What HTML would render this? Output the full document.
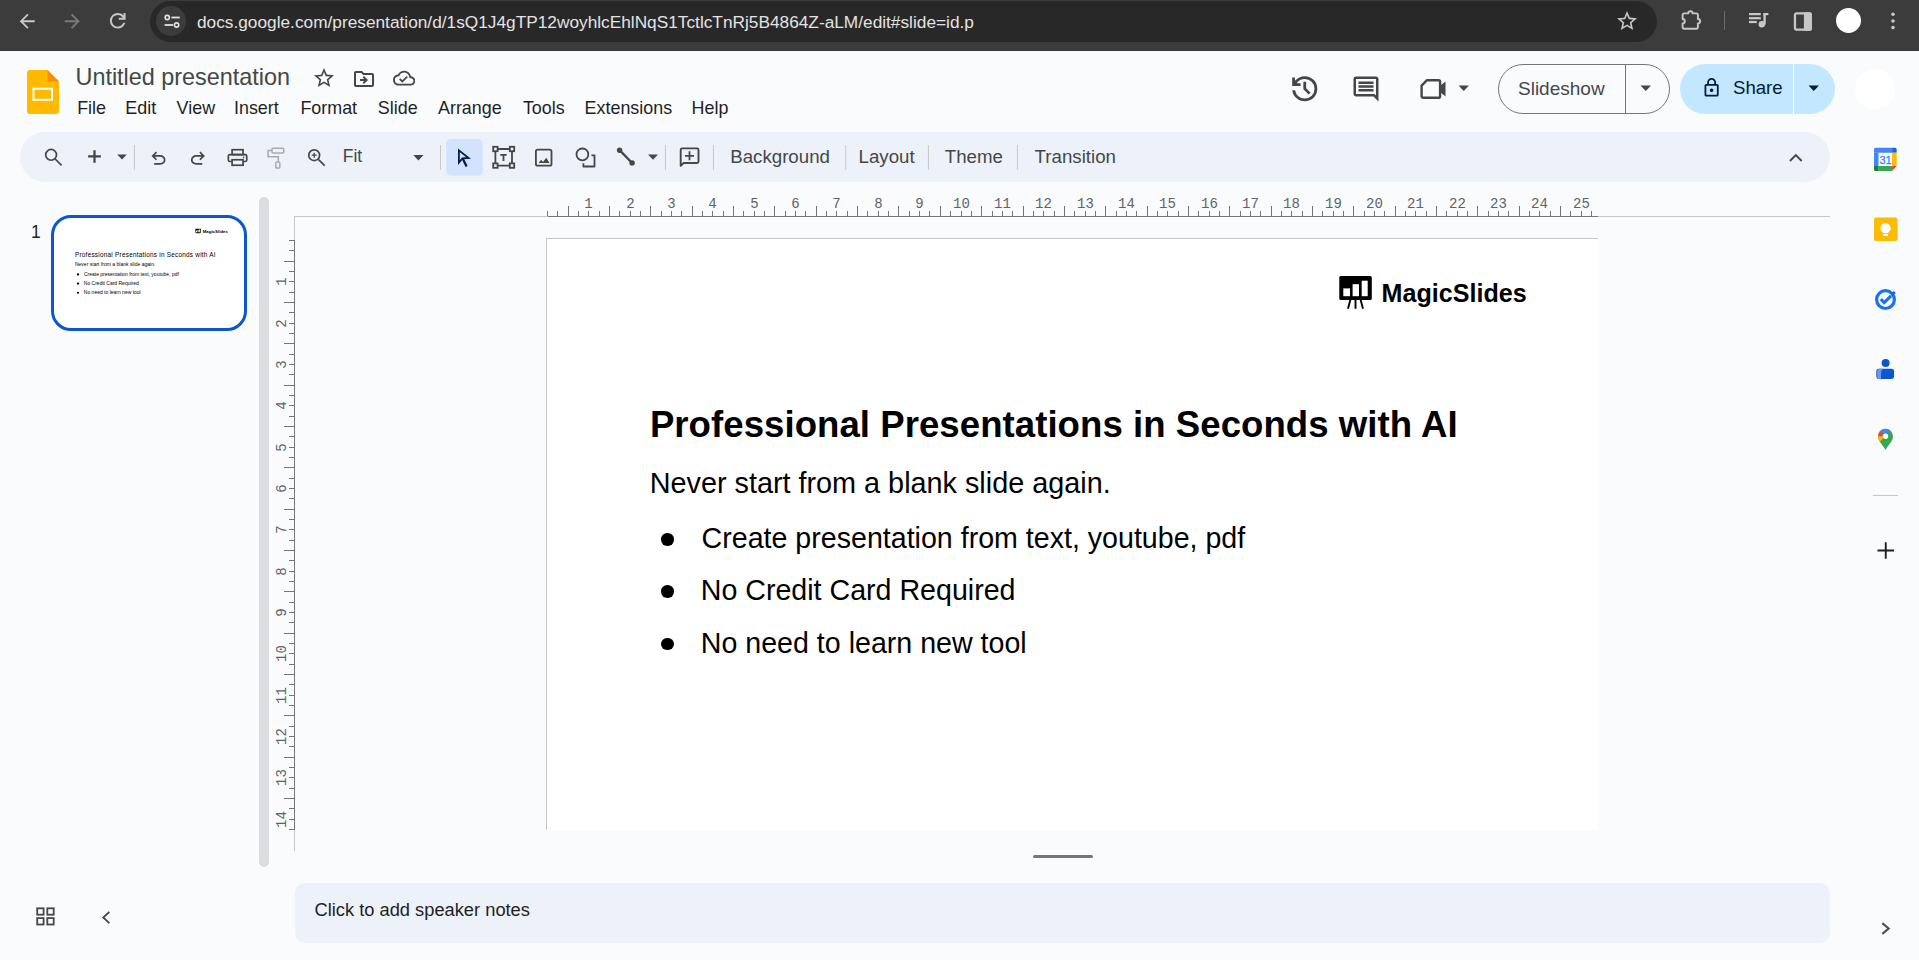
<!DOCTYPE html>
<html><head><meta charset="utf-8">
<style>
*{margin:0;padding:0;box-sizing:border-box}
html,body{width:1919px;height:960px;overflow:hidden;background:#f9fbfd;font-family:"Liberation Sans",sans-serif;position:relative}
.a{position:absolute}
.t{position:absolute;line-height:1;white-space:pre}
svg{position:absolute;display:block}
</style></head><body>

<!-- ===== Browser chrome ===== -->
<div class="a" style="left:0;top:0;width:1919px;height:51px;background:#3c3c3c"></div>
<div class="a" style="left:150px;top:0.5px;width:1507px;height:41.5px;border-radius:21px;background:#282828"></div>
<div class="a" style="left:156px;top:6px;width:30px;height:30px;border-radius:15px;background:#3c3c3c"></div>
<!-- back / forward / reload -->
<svg style="left:16.25px;top:9.75px" width="22.5" height="22.5" viewBox="0 -960 960 960"><path fill="#c7c7c7" d="m313-440 224 224-57 56-320-320 320-320 57 56-224 224h487v80H313Z"/></svg>
<svg style="left:61.25px;top:9.75px" width="22.5" height="22.5" viewBox="0 -960 960 960"><path fill="#7b7b7b" d="M647-440H160v-80h487L423-744l57-56 320 320-320 320-57-56 224-224Z"/></svg>
<svg style="left:105.8px;top:8.6px" width="23.5" height="23.5" viewBox="0 -960 960 960"><path fill="#c7c7c7" d="M480-160q-134 0-227-93t-93-227q0-134 93-227t227-93q69 0 132 28.5T720-690v-110h80v280H520v-80h168q-32-56-87.5-88T480-720q-100 0-170 70t-70 170q0 100 70 170t170 70q77 0 139-44t87-116h84q-28 106-114 173t-196 67Z"/></svg>
<!-- tune icon -->
<svg style="left:162.6px;top:12px" width="20" height="20" viewBox="0 0 20 20"><g fill="none" stroke="#e3e3e3" stroke-width="1.6"><circle cx="4.25" cy="5.5" r="2.1"/><circle cx="13.6" cy="13" r="2.1"/></g><g fill="#e3e3e3"><rect x="8.4" y="4.6" width="8.4" height="1.8"/><rect x="1.6" y="12.1" width="8.6" height="1.8"/></g></svg>
<div class="t" style="left:197px;top:13.7px;font-size:17.27px;color:#e3e3e3">docs.google.com/presentation/d/1sQ1J4gTP12woyhlcEhlNqS1TctlcTnRj5B4864Z-aLM/edit#slide=id.p</div>
<!-- star -->
<svg style="left:1615px;top:9px" width="24" height="24" viewBox="0 0 24 24"><path fill="#c7c7c7" d="M22 9.24l-7.19-.62L12 2 9.19 8.63 2 9.24l5.46 4.73L5.82 21 12 17.27 18.18 21l-1.63-7.03L22 9.24zM12 15.4l-3.76 2.27 1-4.28-3.32-2.88 4.38-.38L12 6.1l1.71 4.04 4.38.38-3.32 2.88 1 4.28L12 15.4z"/></svg>
<!-- extension puzzle -->
<svg style="left:0;top:0" width="1919" height="50" viewBox="0 0 1919 50"><path fill="none" stroke="#c7c7c7" stroke-width="1.9" stroke-linejoin="round" d="M1682.6 15a1.6 1.6 0 0 1 1.6-1.6H1688.2a2.2 2.2 0 0 1 4.4 0H1696.3a1.6 1.6 0 0 1 1.6 1.6V19.05a2.2 2.2 0 0 1 0 4.4V27.1a1.6 1.6 0 0 1-1.6 1.6H1684.2a1.6 1.6 0 0 1-1.6-1.6V23.45a2.2 2.2 0 0 0 0-4.4Z"/></svg>
<div class="a" style="left:1723.5px;top:11px;width:1px;height:19px;background:#6b6b6b"></div>
<!-- queue music -->
<svg style="left:1747.5px;top:11px" width="22" height="18" viewBox="0 0 22 18"><g fill="#c7c7c7"><rect x="1" y="2" width="11.8" height="2.2"/><rect x="1" y="6.1" width="11.8" height="2.2"/><rect x="1" y="9.9" width="7.8" height="2.2"/><rect x="15.4" y="2" width="2.4" height="11.5"/><rect x="15.4" y="2" width="5" height="2.2"/><circle cx="13.8" cy="13.2" r="3.2"/></g></svg>
<!-- side panel -->
<svg style="left:1792.5px;top:11px" width="20" height="20" viewBox="0 0 20 20"><rect x="1.95" y="2.35" width="15.8" height="16.3" rx="2" fill="none" stroke="#c7c7c7" stroke-width="2.3"/><rect x="10.9" y="1.2" width="7.9" height="18.6" rx="1.5" fill="#c7c7c7"/></svg>
<div class="a" style="left:1835.5px;top:8px;width:25px;height:25px;border-radius:50%;background:#fff"></div>
<svg style="left:1881px;top:9px" width="24" height="24" viewBox="0 0 24 24"><g fill="#c7c7c7"><circle cx="12" cy="5.3" r="1.8"/><circle cx="12" cy="12" r="1.8"/><circle cx="12" cy="18.6" r="1.8"/></g></svg>

<!-- ===== Slides header ===== -->
<svg style="left:27px;top:70px" width="32" height="44" viewBox="0 0 32 44"><path fill="#ffba00" d="M3 0h17.5L32 11.5V41a3 3 0 0 1-3 3H3a3 3 0 0 1-3-3V3a3 3 0 0 1 3-3z"/><path fill="#ff8f00" d="M20.5 0L32 11.5H20.5z"/><rect x="6.5" y="18.7" width="18.5" height="11.1" fill="none" stroke="#fff" stroke-width="2"/></svg>
<div class="t" style="left:75.5px;top:65.5px;font-size:23.4px;color:#444746">Untitled presentation</div>

<div class="t" style="left:77.2px;top:99.8px;font-size:17.9px;color:#1f1f1f">File</div>
<div class="t" style="left:125.3px;top:99.8px;font-size:17.9px;color:#1f1f1f">Edit</div>
<div class="t" style="left:176.6px;top:99.8px;font-size:17.9px;color:#1f1f1f">View</div>
<div class="t" style="left:234px;top:99.8px;font-size:17.9px;color:#1f1f1f">Insert</div>
<div class="t" style="left:300.4px;top:99.8px;font-size:17.9px;color:#1f1f1f">Format</div>
<div class="t" style="left:377.8px;top:99.8px;font-size:17.9px;color:#1f1f1f">Slide</div>
<div class="t" style="left:438px;top:99.8px;font-size:17.9px;color:#1f1f1f">Arrange</div>
<div class="t" style="left:522.9px;top:99.8px;font-size:17.9px;color:#1f1f1f">Tools</div>
<div class="t" style="left:584.6px;top:99.8px;font-size:17.9px;color:#1f1f1f">Extensions</div>
<div class="t" style="left:691.6px;top:99.8px;font-size:17.9px;color:#1f1f1f">Help</div>

<!-- star / move / cloud -->
<svg style="left:311.5px;top:66px" width="24" height="24" viewBox="0 0 24 24"><path fill="#444746" d="M22 9.24l-7.19-.62L12 2 9.19 8.63 2 9.24l5.46 4.73L5.82 21 12 17.27 18.18 21l-1.63-7.03L22 9.24zM12 15.4l-3.76 2.27 1-4.28-3.32-2.88 4.38-.38L12 6.1l1.71 4.04 4.38.38-3.32 2.88 1 4.28L12 15.4z"/></svg>
<svg style="left:351.5px;top:67px" width="24" height="24" viewBox="0 0 24 24"><path fill="#444746" d="M20 6h-8l-2-2H4c-1.1 0-1.99.9-1.99 2L2 18c0 1.1.9 2 2 2h16c1.1 0 2-.9 2-2V8c0-1.1-.9-2-2-2zm0 12H4V6h5.17l2 2H20v10zm-7.84-6H8v2h4.16l-1.59 1.59L11.99 17 16 13.01 11.99 9l-1.41 1.41L12.16 12z"/></svg>
<svg style="left:392.5px;top:67.3px" width="22.3" height="22.3" viewBox="0 0 24 24"><path fill="#444746" d="M19.35 10.04C18.67 6.59 15.64 4 12 4 9.11 4 6.6 5.64 5.35 8.04 2.34 8.36 0 10.91 0 14c0 3.31 2.69 6 6 6h13c2.760 0 5-2.24 5-5 0-2.64-2.05-4.78-4.65-4.96zM19 18H6c-2.21 0-4-1.79-4-4 0-2.050 1.53-3.76 3.56-3.97l1.07-.11.5-.95C8.08 7.14 9.94 6 12 6c2.62 0 4.88 1.86 5.39 4.43l.3 1.5 1.53.11c1.56.1 2.78 1.41 2.78 2.96 0 1.65-1.35 3-3 3zm-9-3.820l-2.09-2.09L6.5 13.5 10 17l6.01-6.01-1.41-1.41z"/></svg>

<!-- right header icons -->
<svg style="left:1287.8px;top:72.2px" width="33.5" height="33.5" viewBox="0 -960 960 960"><path fill="#444746" d="M480-120q-138 0-240.5-91.5T122-440h82q14 104 92.5 172T480-200q117 0 198.5-81.5T760-480q0-117-81.5-198.5T480-760q-69 0-129 32t-101 88h110v80H120v-240h80v94q51-64 124.5-99T480-840q75 0 140.5 28.5t114 77q48.5 48.5 77 114T840-480q0 75-28.5 140.5t-77 114q-48.5 48.5-114 77T480-120Zm112-192L440-464v-216h80v184l128 128-56 56Z"/></svg>
<svg style="left:1351px;top:74px" width="30" height="30" viewBox="0 0 24 24"><path fill="#444746" d="M21.99 4c0-1.1-.89-2-1.99-2H4c-1.1 0-2 .9-2 2v12c0 1.1.9 2 2 2h14l4 4-.01-18zM20 4v13.17L18.83 16H4V4h16zM6 12h12v2H6zm0-3h12v2H6zm0-3h12v2H6z"/></svg>
<svg style="left:1420px;top:78px" width="28" height="22" viewBox="0 0 28 22"><path fill="none" stroke="#444746" stroke-width="2.4" stroke-linejoin="round" d="M7 2.2h11.5a1.6 1.6 0 0 1 1.6 1.6V18.2a1.6 1.6 0 0 1-1.6 1.6H3.2a1.6 1.6 0 0 1-1.6-1.6V7.6z"/><path fill="#444746" d="M20 8l5.5-4.5v15L20 14z"/></svg>
<svg style="left:1458px;top:85px" width="12" height="7" viewBox="0 0 12 7"><path fill="#444746" d="M0.5 0.5h10.5L5.75 6z"/></svg>

<!-- Slideshow -->
<div class="a" style="left:1498px;top:64px;width:172px;height:50px;border:1.2px solid #747775;border-radius:25px"></div>
<div class="a" style="left:1625px;top:64px;width:1.2px;height:50px;background:#747775"></div>
<div class="t" style="left:1518px;top:79px;font-size:19px;color:#444746">Slideshow</div>
<svg style="left:1640px;top:85px" width="12" height="7" viewBox="0 0 12 7"><path fill="#444746" d="M0.5 0.5h10.5L5.75 6z"/></svg>
<!-- Share -->
<div class="a" style="left:1680px;top:64px;width:155px;height:50px;border-radius:25px;background:#c2e7ff"></div>
<div class="a" style="left:1793px;top:64px;width:1px;height:50px;background:#fff"></div>
<svg style="left:1701.3px;top:77px" width="21.2" height="21.2" viewBox="0 -960 960 960"><path fill="#001d35" d="M240-80q-33 0-56.5-23.5T160-160v-400q0-33 23.5-56.5T240-640h40v-80q0-83 58.5-141.5T480-920q83 0 141.5 58.5T680-720v80h40q33 0 56.5 23.5T800-560v400q0 33-23.5 56.5T720-80H240Zm0-80h480v-400H240v400Zm240-120q33 0 56.5-23.5T560-360q0-33-23.5-56.5T480-440q-33 0-56.5 23.5T400-360q0 33 23.5 56.5T480-280ZM360-640h240v-80q0-50-35-85t-85-35q-50 0-85 35t-35 85v80Z"/></svg>
<div class="t" style="left:1733px;top:79.3px;font-size:18.6px;color:#001d35">Share</div>
<svg style="left:1808px;top:85px" width="12" height="7" viewBox="0 0 12 7"><path fill="#001d35" d="M0.5 0.5h10.5L5.75 6z"/></svg>
<div class="a" style="left:1855px;top:68.5px;width:40px;height:40px;border-radius:50%;background:#fff"></div>

<!-- ===== Toolbar ===== -->
<div class="a" style="left:20px;top:132px;width:1810px;height:50px;border-radius:25px;background:#edf2fa"></div>

<!-- toolbar icons -->
<svg style="left:0;top:0" width="1919" height="960" viewBox="0 0 1919 960">
<g fill="none" stroke="#444746" stroke-width="1.7">
 <circle cx="51.1" cy="154.85" r="5.4"/><path d="M55.2 159 L61.6 165.4"/>
 <circle cx="314.2" cy="155.2" r="5.4"/><path d="M318.3 159.3 L324.7 165.7"/>
</g>
<g fill="none" stroke="#444746" stroke-width="1.3"><path d="M311.7 155.2h5M314.2 152.7v5"/></g>
<path fill="none" stroke="#444746" stroke-width="2.3" d="M88.1 156.4h12.8M94.5 150.2v12.5"/>
<path fill="#444746" d="M117.2 154.6h9.6l-4.8 5z M413.3 155h10.2l-5.1 5.5z M648 154.5h10l-5 5.2z"/>
<g fill="#c7c7c7"><rect x="133.9" y="145" width="1" height="24.7"/><rect x="440" y="145" width="1" height="24.7"/><rect x="665" y="145" width="1" height="24.7"/><rect x="713" y="145" width="1" height="24.7"/><rect x="845.2" y="145" width="1" height="24.7"/><rect x="927.9" y="145" width="1" height="24.7"/><rect x="1016.9" y="145" width="1" height="24.7"/></g>
<svg x="148.0" y="148.1" width="21" height="21" viewBox="0 -960 960 960"><path fill="#444746" d="M280-200v-80h284q63 0 109.5-40T720-420q0-60-46.5-100T564-560H312l104 104-56 56-200-200 200-200 56 56-104 104h252q97 0 166.5 63T800-420q0 94-69.5 157T564-200H280Z"/></svg>
<svg x="187.4" y="148.1" width="21" height="21" viewBox="0 -960 960 960"><path fill="#444746" d="M396-200q-97 0-166.5-63T160-420q0-94 69.5-157T396-640h252L544-744l56-56 200 200-200 200-56-56 104-104H396q-63 0-109.5 40T240-420q0 60 46.5 100T396-280h284v80H396Z"/></svg>
<g fill="none" stroke="#444746" stroke-width="1.7">
 <rect x="232.1" y="149.7" width="10.95" height="4.9"/>
 <rect x="228.35" y="154.6" width="18.4" height="6.9" rx="1.6"/>
 <rect x="232.1" y="159.75" width="10.95" height="5.5" fill="#edf2fa"/>
</g>
<circle cx="243.6" cy="157.4" r="0.8" fill="#444746"/>
<g fill="none" stroke="#a8abaf" stroke-width="1.5">
 <rect x="272" y="148.3" width="11.8" height="4.6" rx="1"/>
 <path d="M272 150.6h-3.9v6.2h10.2v4.4"/>
 <rect x="275.8" y="162" width="4" height="6" rx="0.8"/>
</g>
<rect x="446.2" y="139.1" width="36.6" height="36.6" rx="5" fill="#d3e3fd"/>
<path fill="none" stroke="#041e49" stroke-width="1.8" stroke-linejoin="miter" d="M458.9 150.3 V162.6 L462.4 158.4 L468.6 158 Z"/><path fill="none" stroke="#041e49" stroke-width="2.3" d="M462.6 158.3 L466.6 166.4"/>
<g fill="none" stroke="#444746" stroke-width="1.8">
 <rect x="493.2" y="146.8" width="4.4" height="4.4"/><rect x="509.8" y="146.8" width="4.4" height="4.4"/>
 <rect x="493.2" y="163.4" width="4.4" height="4.4"/><rect x="509.8" y="163.4" width="4.4" height="4.4"/>
 <path d="M497.6 149h12.2M497.6 165.6h12.2M495.4 151.2v12.2M512 151.2v12.2"/>
 <path d="M500.3 154.8h6.4M503.5 154.8v6.3"/>
 <rect x="535.9" y="149.7" width="15.6" height="16" rx="1.8"/>
 <circle cx="582.4" cy="154.4" r="5.9"/>
 <path d="M583.4 163.2v3.3h11.1v-11.2h-3.1" stroke-width="1.8" stroke-linejoin="round"/>
</g>
<path fill="#444746" d="M538.6 163.1 l2.5-3.4 1.9 2.3 3.2-4.3 3.4 5.4z"/>
<path fill="none" stroke="#444746" stroke-width="2.3" d="M619.6 150.1 L632.1 163"/>
<circle cx="619.6" cy="150.2" r="2.7" fill="#444746"/><circle cx="632.1" cy="162.9" r="2.7" fill="#444746"/>
<path fill="none" stroke="#444746" stroke-width="1.9" stroke-linejoin="round" d="M680.7 165.9V149.9a1.5 1.5 0 0 1 1.5-1.5H697a1.5 1.5 0 0 1 1.5 1.5V161.5a1.5 1.5 0 0 1-1.5 1.5H683.6Z"/>
<path fill="none" stroke="#444746" stroke-width="1.8" d="M685 155.8h9M689.5 151.3v9"/>
<path fill="none" stroke="#444746" stroke-width="1.8" d="M1789.9 161 L1795.8 155 L1801.7 161"/>
</svg>
<div class="t" style="left:342.8px;top:147.7px;font-size:17.5px;color:#444746">Fit</div>
<div class="t" style="left:730.2px;top:147.5px;font-size:18.7px;color:#444746">Background</div>
<div class="t" style="left:858.5px;top:147.5px;font-size:18.7px;color:#444746">Layout</div>
<div class="t" style="left:944.8px;top:147.5px;font-size:18.7px;color:#444746">Theme</div>
<div class="t" style="left:1034.6px;top:147.5px;font-size:18.7px;color:#444746">Transition</div>

<!-- ===== Filmstrip ===== -->
<div class="t" style="left:31px;top:223.5px;font-size:17.5px;color:#1f1f1f">1</div>
<div class="a" style="left:51px;top:215px;width:195.5px;height:115.5px;border:3.6px solid #0b57d0;border-radius:20px;background:#fff"></div>
<div class="a" style="left:57px;top:221.7px;width:1051px;height:591px;transform:scale(0.1745);transform-origin:0 0"><svg style="left:792px;top:37px" width="34" height="34" viewBox="0 0 34 34"><rect x="0.3" y="0" width="32.5" height="24.1" rx="1.6" fill="#000"/><g fill="#fff"><rect x="4.3" y="12.4" width="6.7" height="7.8"/><rect x="13.6" y="8.2" width="6.4" height="12"/><rect x="22.7" y="4.7" width="6" height="15.5"/></g><path fill="none" stroke="#000" stroke-width="1.9" d="M11.3 24 L9 32.8 M16.5 24 V32.8 M21.7 24 L24 32.8"/></svg>
<div class="t" style="left:834.6px;top:41.8px;font-size:25.1px;font-weight:700;color:#000">MagicSlides</div>
<div class="t" style="left:102.9px;top:168px;font-size:36.6px;font-weight:400;color:#000;letter-spacing:1.4px">Professional Presentations in Seconds with AI</div>
<div class="t" style="left:102.7px;top:230.2px;font-size:28.8px;color:#000">Never start from a blank slide again.</div>
<div class="a" style="left:114px;top:294.25px;width:12.5px;height:12.5px;border-radius:50%;background:#000"></div>
<div class="a" style="left:114px;top:346.35px;width:12.5px;height:12.5px;border-radius:50%;background:#000"></div>
<div class="a" style="left:114px;top:398.95px;width:12.5px;height:12.5px;border-radius:50%;background:#000"></div>
<div class="t" style="left:154.6px;top:284.5px;font-size:28.6px;color:#000">Create presentation from text, youtube, pdf</div>
<div class="t" style="left:153.8px;top:336.5px;font-size:28.6px;color:#000">No Credit Card Required</div>
<div class="t" style="left:153.8px;top:389.7px;font-size:28.6px;color:#000">No need to learn new tool</div>
</div>
<div class="a" style="left:259px;top:197px;width:10px;height:670px;border-radius:5px;background:#dadce0"></div>

<!-- ===== Editor ===== -->
<div class="a" style="left:294px;top:216px;width:1536px;height:1px;background:#c7c7c7"></div>
<div class="a" style="left:294px;top:216px;width:1px;height:635px;background:#c7c7c7"></div>
<div class="a" style="left:546px;top:238px;width:1052px;height:592px;background:#fff;border-left:1px solid #c7c7c7;border-top:1px solid #c7c7c7"></div>

<div class="a" style="left:547px;top:239px;width:1051px;height:591px;overflow:hidden"><svg style="left:792px;top:37px" width="34" height="34" viewBox="0 0 34 34"><rect x="0.3" y="0" width="32.5" height="24.1" rx="1.6" fill="#000"/><g fill="#fff"><rect x="4.3" y="12.4" width="6.7" height="7.8"/><rect x="13.6" y="8.2" width="6.4" height="12"/><rect x="22.7" y="4.7" width="6" height="15.5"/></g><path fill="none" stroke="#000" stroke-width="1.9" d="M11.3 24 L9 32.8 M16.5 24 V32.8 M21.7 24 L24 32.8"/></svg>
<div class="t" style="left:834.6px;top:41.8px;font-size:25.1px;font-weight:700;color:#000">MagicSlides</div>
<div class="t" style="left:102.9px;top:168px;font-size:36.6px;font-weight:700;color:#000;letter-spacing:0.05px">Professional Presentations in Seconds with AI</div>
<div class="t" style="left:102.7px;top:230.2px;font-size:28.8px;color:#000">Never start from a blank slide again.</div>
<div class="a" style="left:114px;top:294.25px;width:12.5px;height:12.5px;border-radius:50%;background:#000"></div>
<div class="a" style="left:114px;top:346.35px;width:12.5px;height:12.5px;border-radius:50%;background:#000"></div>
<div class="a" style="left:114px;top:398.95px;width:12.5px;height:12.5px;border-radius:50%;background:#000"></div>
<div class="t" style="left:154.6px;top:284.5px;font-size:28.6px;color:#000">Create presentation from text, youtube, pdf</div>
<div class="t" style="left:153.8px;top:336.5px;font-size:28.6px;color:#000">No Credit Card Required</div>
<div class="t" style="left:153.8px;top:389.7px;font-size:28.6px;color:#000">No need to learn new tool</div>
</div>
<svg style="left:0;top:0" width="1919" height="960" viewBox="0 0 1919 960"><g font-family="Liberation Mono" font-size="14" fill="#5f6368"><rect x="294" y="216" width="254" height="1" fill="#c7c7c7"/><rect x="1598" y="216" width="232" height="1" fill="#c7c7c7"/><rect x="548" y="216" width="1050" height="1" fill="#747775"/><rect x="547" y="211" width="1" height="5" fill="#747775"/><rect x="557" y="211" width="1" height="5" fill="#747775"/><rect x="568" y="206" width="1" height="10" fill="#747775"/><rect x="578" y="211" width="1" height="5" fill="#747775"/><rect x="588" y="211" width="1" height="5" fill="#747775"/><text x="588.50" y="208" text-anchor="middle">1</text><rect x="599" y="211" width="1" height="5" fill="#747775"/><rect x="609" y="206" width="1" height="10" fill="#747775"/><rect x="619" y="211" width="1" height="5" fill="#747775"/><rect x="630" y="211" width="1" height="5" fill="#747775"/><text x="630.50" y="208" text-anchor="middle">2</text><rect x="640" y="211" width="1" height="5" fill="#747775"/><rect x="650" y="206" width="1" height="10" fill="#747775"/><rect x="661" y="211" width="1" height="5" fill="#747775"/><rect x="671" y="211" width="1" height="5" fill="#747775"/><text x="671.50" y="208" text-anchor="middle">3</text><rect x="681" y="211" width="1" height="5" fill="#747775"/><rect x="692" y="206" width="1" height="10" fill="#747775"/><rect x="702" y="211" width="1" height="5" fill="#747775"/><rect x="712" y="211" width="1" height="5" fill="#747775"/><text x="712.50" y="208" text-anchor="middle">4</text><rect x="723" y="211" width="1" height="5" fill="#747775"/><rect x="733" y="206" width="1" height="10" fill="#747775"/><rect x="743" y="211" width="1" height="5" fill="#747775"/><rect x="754" y="211" width="1" height="5" fill="#747775"/><text x="754.50" y="208" text-anchor="middle">5</text><rect x="764" y="211" width="1" height="5" fill="#747775"/><rect x="774" y="206" width="1" height="10" fill="#747775"/><rect x="785" y="211" width="1" height="5" fill="#747775"/><rect x="795" y="211" width="1" height="5" fill="#747775"/><text x="795.50" y="208" text-anchor="middle">6</text><rect x="805" y="211" width="1" height="5" fill="#747775"/><rect x="816" y="206" width="1" height="10" fill="#747775"/><rect x="826" y="211" width="1" height="5" fill="#747775"/><rect x="836" y="211" width="1" height="5" fill="#747775"/><text x="836.50" y="208" text-anchor="middle">7</text><rect x="847" y="211" width="1" height="5" fill="#747775"/><rect x="857" y="206" width="1" height="10" fill="#747775"/><rect x="867" y="211" width="1" height="5" fill="#747775"/><rect x="878" y="211" width="1" height="5" fill="#747775"/><text x="878.50" y="208" text-anchor="middle">8</text><rect x="888" y="211" width="1" height="5" fill="#747775"/><rect x="898" y="206" width="1" height="10" fill="#747775"/><rect x="909" y="211" width="1" height="5" fill="#747775"/><rect x="919" y="211" width="1" height="5" fill="#747775"/><text x="919.50" y="208" text-anchor="middle">9</text><rect x="929" y="211" width="1" height="5" fill="#747775"/><rect x="940" y="206" width="1" height="10" fill="#747775"/><rect x="950" y="211" width="1" height="5" fill="#747775"/><rect x="961" y="211" width="1" height="5" fill="#747775"/><text x="961.50" y="208" text-anchor="middle">10</text><rect x="971" y="211" width="1" height="5" fill="#747775"/><rect x="981" y="206" width="1" height="10" fill="#747775"/><rect x="992" y="211" width="1" height="5" fill="#747775"/><rect x="1002" y="211" width="1" height="5" fill="#747775"/><text x="1002.50" y="208" text-anchor="middle">11</text><rect x="1012" y="211" width="1" height="5" fill="#747775"/><rect x="1023" y="206" width="1" height="10" fill="#747775"/><rect x="1033" y="211" width="1" height="5" fill="#747775"/><rect x="1043" y="211" width="1" height="5" fill="#747775"/><text x="1043.50" y="208" text-anchor="middle">12</text><rect x="1054" y="211" width="1" height="5" fill="#747775"/><rect x="1064" y="206" width="1" height="10" fill="#747775"/><rect x="1074" y="211" width="1" height="5" fill="#747775"/><rect x="1085" y="211" width="1" height="5" fill="#747775"/><text x="1085.50" y="208" text-anchor="middle">13</text><rect x="1095" y="211" width="1" height="5" fill="#747775"/><rect x="1105" y="206" width="1" height="10" fill="#747775"/><rect x="1116" y="211" width="1" height="5" fill="#747775"/><rect x="1126" y="211" width="1" height="5" fill="#747775"/><text x="1126.50" y="208" text-anchor="middle">14</text><rect x="1136" y="211" width="1" height="5" fill="#747775"/><rect x="1147" y="206" width="1" height="10" fill="#747775"/><rect x="1157" y="211" width="1" height="5" fill="#747775"/><rect x="1167" y="211" width="1" height="5" fill="#747775"/><text x="1167.50" y="208" text-anchor="middle">15</text><rect x="1178" y="211" width="1" height="5" fill="#747775"/><rect x="1188" y="206" width="1" height="10" fill="#747775"/><rect x="1198" y="211" width="1" height="5" fill="#747775"/><rect x="1209" y="211" width="1" height="5" fill="#747775"/><text x="1209.50" y="208" text-anchor="middle">16</text><rect x="1219" y="211" width="1" height="5" fill="#747775"/><rect x="1229" y="206" width="1" height="10" fill="#747775"/><rect x="1240" y="211" width="1" height="5" fill="#747775"/><rect x="1250" y="211" width="1" height="5" fill="#747775"/><text x="1250.50" y="208" text-anchor="middle">17</text><rect x="1260" y="211" width="1" height="5" fill="#747775"/><rect x="1271" y="206" width="1" height="10" fill="#747775"/><rect x="1281" y="211" width="1" height="5" fill="#747775"/><rect x="1291" y="211" width="1" height="5" fill="#747775"/><text x="1291.50" y="208" text-anchor="middle">18</text><rect x="1302" y="211" width="1" height="5" fill="#747775"/><rect x="1312" y="206" width="1" height="10" fill="#747775"/><rect x="1322" y="211" width="1" height="5" fill="#747775"/><rect x="1333" y="211" width="1" height="5" fill="#747775"/><text x="1333.50" y="208" text-anchor="middle">19</text><rect x="1343" y="211" width="1" height="5" fill="#747775"/><rect x="1353" y="206" width="1" height="10" fill="#747775"/><rect x="1364" y="211" width="1" height="5" fill="#747775"/><rect x="1374" y="211" width="1" height="5" fill="#747775"/><text x="1374.50" y="208" text-anchor="middle">20</text><rect x="1384" y="211" width="1" height="5" fill="#747775"/><rect x="1395" y="206" width="1" height="10" fill="#747775"/><rect x="1405" y="211" width="1" height="5" fill="#747775"/><rect x="1415" y="211" width="1" height="5" fill="#747775"/><text x="1415.50" y="208" text-anchor="middle">21</text><rect x="1426" y="211" width="1" height="5" fill="#747775"/><rect x="1436" y="206" width="1" height="10" fill="#747775"/><rect x="1446" y="211" width="1" height="5" fill="#747775"/><rect x="1457" y="211" width="1" height="5" fill="#747775"/><text x="1457.50" y="208" text-anchor="middle">22</text><rect x="1467" y="211" width="1" height="5" fill="#747775"/><rect x="1477" y="206" width="1" height="10" fill="#747775"/><rect x="1488" y="211" width="1" height="5" fill="#747775"/><rect x="1498" y="211" width="1" height="5" fill="#747775"/><text x="1498.50" y="208" text-anchor="middle">23</text><rect x="1508" y="211" width="1" height="5" fill="#747775"/><rect x="1519" y="206" width="1" height="10" fill="#747775"/><rect x="1529" y="211" width="1" height="5" fill="#747775"/><rect x="1539" y="211" width="1" height="5" fill="#747775"/><text x="1539.50" y="208" text-anchor="middle">24</text><rect x="1550" y="211" width="1" height="5" fill="#747775"/><rect x="1560" y="206" width="1" height="10" fill="#747775"/><rect x="1570" y="211" width="1" height="5" fill="#747775"/><rect x="1581" y="211" width="1" height="5" fill="#747775"/><text x="1581.50" y="208" text-anchor="middle">25</text><rect x="1591" y="211" width="1" height="5" fill="#747775"/><rect x="294" y="216" width="1" height="24" fill="#c7c7c7"/><rect x="294" y="830" width="1" height="21" fill="#c7c7c7"/><rect x="294" y="240" width="1" height="590" fill="#747775"/><rect x="289" y="240" width="5" height="1" fill="#747775"/><rect x="289" y="250" width="5" height="1" fill="#747775"/><rect x="284" y="261" width="10" height="1" fill="#747775"/><rect x="289" y="271" width="5" height="1" fill="#747775"/><rect x="289" y="281" width="5" height="1" fill="#747775"/><text transform="translate(286.1 281.50) rotate(-90)" text-anchor="middle">1</text><rect x="289" y="292" width="5" height="1" fill="#747775"/><rect x="284" y="302" width="10" height="1" fill="#747775"/><rect x="289" y="312" width="5" height="1" fill="#747775"/><rect x="289" y="323" width="5" height="1" fill="#747775"/><text transform="translate(286.1 323.50) rotate(-90)" text-anchor="middle">2</text><rect x="289" y="333" width="5" height="1" fill="#747775"/><rect x="284" y="343" width="10" height="1" fill="#747775"/><rect x="289" y="354" width="5" height="1" fill="#747775"/><rect x="289" y="364" width="5" height="1" fill="#747775"/><text transform="translate(286.1 364.50) rotate(-90)" text-anchor="middle">3</text><rect x="289" y="374" width="5" height="1" fill="#747775"/><rect x="284" y="385" width="10" height="1" fill="#747775"/><rect x="289" y="395" width="5" height="1" fill="#747775"/><rect x="289" y="405" width="5" height="1" fill="#747775"/><text transform="translate(286.1 405.50) rotate(-90)" text-anchor="middle">4</text><rect x="289" y="416" width="5" height="1" fill="#747775"/><rect x="284" y="426" width="10" height="1" fill="#747775"/><rect x="289" y="436" width="5" height="1" fill="#747775"/><rect x="289" y="447" width="5" height="1" fill="#747775"/><text transform="translate(286.1 447.50) rotate(-90)" text-anchor="middle">5</text><rect x="289" y="457" width="5" height="1" fill="#747775"/><rect x="284" y="467" width="10" height="1" fill="#747775"/><rect x="289" y="478" width="5" height="1" fill="#747775"/><rect x="289" y="488" width="5" height="1" fill="#747775"/><text transform="translate(286.1 488.50) rotate(-90)" text-anchor="middle">6</text><rect x="289" y="498" width="5" height="1" fill="#747775"/><rect x="284" y="509" width="10" height="1" fill="#747775"/><rect x="289" y="519" width="5" height="1" fill="#747775"/><rect x="289" y="529" width="5" height="1" fill="#747775"/><text transform="translate(286.1 529.50) rotate(-90)" text-anchor="middle">7</text><rect x="289" y="540" width="5" height="1" fill="#747775"/><rect x="284" y="550" width="10" height="1" fill="#747775"/><rect x="289" y="560" width="5" height="1" fill="#747775"/><rect x="289" y="571" width="5" height="1" fill="#747775"/><text transform="translate(286.1 571.50) rotate(-90)" text-anchor="middle">8</text><rect x="289" y="581" width="5" height="1" fill="#747775"/><rect x="284" y="591" width="10" height="1" fill="#747775"/><rect x="289" y="602" width="5" height="1" fill="#747775"/><rect x="289" y="612" width="5" height="1" fill="#747775"/><text transform="translate(286.1 612.50) rotate(-90)" text-anchor="middle">9</text><rect x="289" y="622" width="5" height="1" fill="#747775"/><rect x="284" y="633" width="10" height="1" fill="#747775"/><rect x="289" y="643" width="5" height="1" fill="#747775"/><rect x="289" y="653" width="5" height="1" fill="#747775"/><text transform="translate(286.1 653.50) rotate(-90)" text-anchor="middle">10</text><rect x="289" y="664" width="5" height="1" fill="#747775"/><rect x="284" y="674" width="10" height="1" fill="#747775"/><rect x="289" y="684" width="5" height="1" fill="#747775"/><rect x="289" y="695" width="5" height="1" fill="#747775"/><text transform="translate(286.1 695.50) rotate(-90)" text-anchor="middle">11</text><rect x="289" y="705" width="5" height="1" fill="#747775"/><rect x="284" y="715" width="10" height="1" fill="#747775"/><rect x="289" y="726" width="5" height="1" fill="#747775"/><rect x="289" y="736" width="5" height="1" fill="#747775"/><text transform="translate(286.1 736.50) rotate(-90)" text-anchor="middle">12</text><rect x="289" y="746" width="5" height="1" fill="#747775"/><rect x="284" y="757" width="10" height="1" fill="#747775"/><rect x="289" y="767" width="5" height="1" fill="#747775"/><rect x="289" y="777" width="5" height="1" fill="#747775"/><text transform="translate(286.1 777.50) rotate(-90)" text-anchor="middle">13</text><rect x="289" y="788" width="5" height="1" fill="#747775"/><rect x="284" y="798" width="10" height="1" fill="#747775"/><rect x="289" y="808" width="5" height="1" fill="#747775"/><rect x="289" y="819" width="5" height="1" fill="#747775"/><text transform="translate(286.1 819.50) rotate(-90)" text-anchor="middle">14</text><rect x="289" y="829" width="5" height="1" fill="#747775"/></g></svg>
<div class="a" style="left:1033px;top:854.5px;width:60px;height:3px;border-radius:1.5px;background:#747775"></div>
<!-- ===== Side panel ===== -->
<svg style="left:0;top:0" width="1919" height="960" viewBox="0 0 1919 960">
<!-- calendar -->
<g>
<path d="M1875.6 147.8H1892.1v4.95H1874V149.4a1.6 1.6 0 0 1 1.6-1.6z" fill="#4285f4"/>
<rect x="1874" y="152.7" width="4.5" height="13.35" fill="#4285f4"/>
<path d="M1892.1 147.8h3a1.6 1.6 0 0 1 1.6 1.6v3.35h-4.6z" fill="#1967d2"/>
<rect x="1892.05" y="152.7" width="4.65" height="13.35" fill="#fbbc04"/>
<rect x="1878.45" y="166" width="13.7" height="5" fill="#34a853"/>
<path d="M1874 166h4.5v5H1875.6a1.6 1.6 0 0 1-1.6-1.6z" fill="#188038"/>
<path d="M1892.1 166h4.6l-4.6 5z" fill="#ea4335"/>
<text x="1885.5" y="163.6" font-family="Liberation Sans" font-size="11" fill="#4285f4" text-anchor="middle" stroke="#4285f4" stroke-width="0.3">31</text>
</g>
<!-- keep -->
<rect x="1874" y="217.5" width="23.5" height="23.5" rx="2" fill="#fbbc04"/>
<circle cx="1885.6" cy="228.3" r="5.1" fill="#fff"/>
<rect x="1883.1" y="234" width="4.9" height="2" fill="#fff"/>
<!-- tasks -->
<circle cx="1885.5" cy="299.6" r="8.9" fill="none" stroke="#1a73e8" stroke-width="3.2"/>
<path d="M1880.8 299.2 l3.4 3.4 l6.8-6.8" fill="none" stroke="#1a73e8" stroke-width="3.2"/>
<path d="M1890.6 294.2 l3.2-3.2 l2 2 l-3.2 3.2z" fill="#1967d2"/>
<!-- contacts -->
<circle cx="1885.6" cy="363.1" r="4" fill="#0b57d0"/>
<path d="M1879.5 368.8h12a2.6 2.6 0 0 1 2.6 2.6v4.6a3 3 0 0 1-3 3h-11.8a3 3 0 0 1-3-3v-4.6a2.6 2.6 0 0 1 2.6-2.6z" fill="#0b57d0"/>
<path d="M1880 368.8h3a6 6 0 0 0 -2 4.5v5.9h-0.8a3 3 0 0 1-3-3v-4.8a2.6 2.6 0 0 1 2.8-2.6z" fill="#6e97e8"/>
<!-- maps -->
<path d="M1885.5 428.8a7.5 7.5 0 0 1 7.5 7.5c0 5-4.2 7.8-7.5 13.7c-3.3-5.9-7.5-8.7-7.5-13.7a7.5 7.5 0 0 1 7.5-7.5z" fill="#34a853"/>
<path d="M1880.2 431a7.5 7.5 0 0 0-2.2 5.3c0 2.2 0.8 3.8 2 5.5l4-4.8z" fill="#fbbc04"/>
<path d="M1880.2 431a7.5 7.5 0 0 1 5.3-2.2 a7.5 7.5 0 0 1 5.3 2.2 l-5.3 5.3 z" fill="#4285f4"/>
<path d="M1880.2 431a7.5 7.5 0 0 0-2.2 5.3l7.5 0z" fill="#ea4335"/>
<circle cx="1885.5" cy="436.3" r="2.7" fill="#fff"/>
<rect x="1873" y="495" width="25" height="1" fill="#c7c7c7"/>
<path d="M1877.5 550.5h16.5M1885.75 542.2v16.6" fill="none" stroke="#1f1f1f" stroke-width="1.9"/>
<!-- bottom -->
<g fill="none" stroke="#444746" stroke-width="1.8">
<rect x="37.2" y="908.3" width="6.4" height="6.4"/><rect x="47.3" y="908.3" width="6.4" height="6.4"/>
<rect x="37.2" y="918.1" width="6.4" height="6.4"/><rect x="47.3" y="918.1" width="6.4" height="6.4"/>
<path d="M109.4 911.8 L103.2 917.5 L109.4 923.2"/>
<path d="M1882.3 923.1 L1888.6 928.5 L1882.3 933.9" stroke="#4f5254" stroke-width="2.2"/>
</g>
</svg>

<!-- ===== Notes ===== -->
<div class="a" style="left:295px;top:883px;width:1535px;height:60px;border-radius:10px;background:#edf2fa"></div>
<div class="t" style="left:314.5px;top:901px;font-size:18.3px;color:#1f1f1f">Click to add speaker notes</div>

</body></html>
